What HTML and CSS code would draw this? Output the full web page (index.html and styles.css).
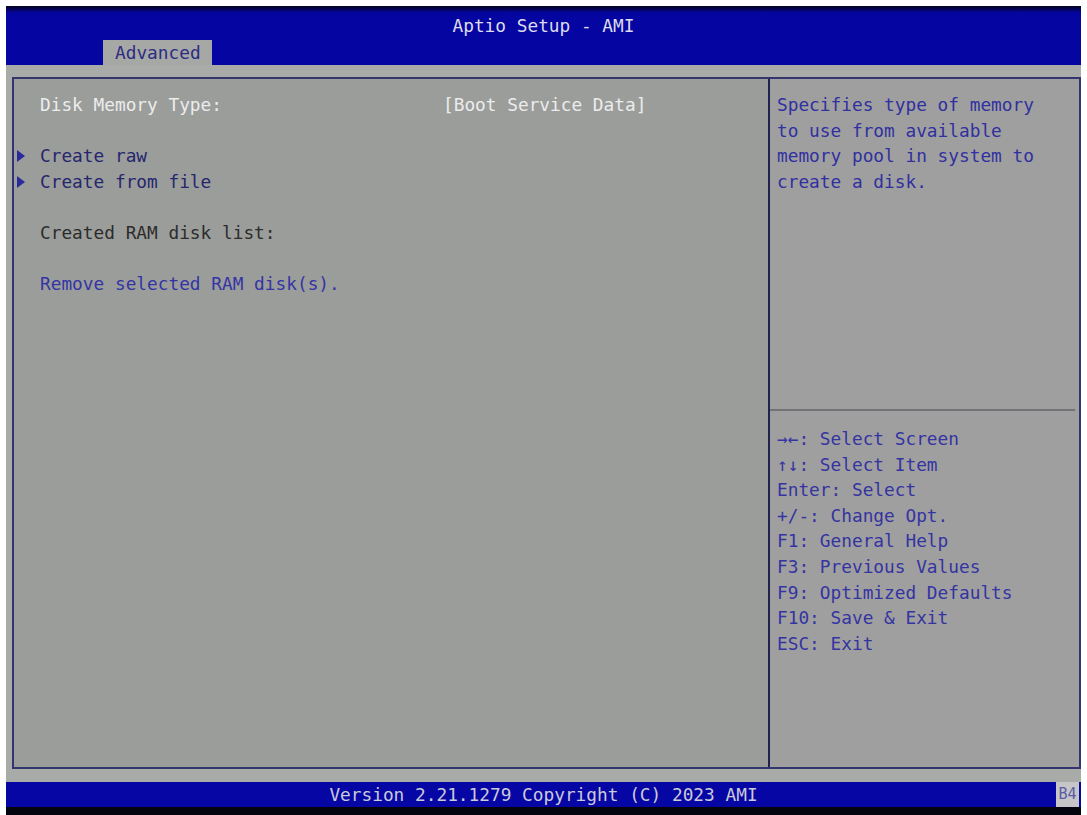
FILE: index.html
```html
<!DOCTYPE html>
<html lang="en">
<head>
    <meta charset="UTF-8">
    <title>Aptio Setup - AMI</title>
    <link rel="stylesheet" href="styles.css">
</head>
<body>
    <div class="screen">
        <div class="header">
            <div class="title">Aptio Setup - AMI</div>
            <div class="tabs">
                <div class="tab">Advanced</div>
            </div>
        </div>
        <div class="body">
            <div class="panel">
                <div class="main">
                    <div class="row">
                        <span class="mark"></span>
                        <span class="label white">Disk Memory Type:</span>
                        <span class="value white">[Boot Service Data]</span>
                    </div>
                    <div class="row"></div>
                    <div class="row">
                        <span class="mark"><span class="arrow"></span></span>
                        <span class="link">Create raw</span>
                    </div>
                    <div class="row">
                        <span class="mark"><span class="arrow"></span></span>
                        <span class="link">Create from file</span>
                    </div>
                    <div class="row"></div>
                    <div class="row">
                        <span class="mark"></span>
                        <span class="dark">Created RAM disk list:</span>
                    </div>
                    <div class="row"></div>
                    <div class="row">
                        <span class="mark"></span>
                        <span class="action">Remove selected RAM disk(s).</span>
                    </div>
                </div>
                <div class="side">
                    <div class="help">
                        Specifies type of memory<br>
                        to use from available<br>
                        memory pool in system to<br>
                        create a disk.
                    </div>
                    <div class="keys">
                        <div>&rarr;&larr;: Select Screen</div>
                        <div>&uarr;&darr;: Select Item</div>
                        <div>Enter: Select</div>
                        <div>+/-: Change Opt.</div>
                        <div>F1: General Help</div>
                        <div>F3: Previous Values</div>
                        <div>F9: Optimized Defaults</div>
                        <div>F10: Save &amp; Exit</div>
                        <div>ESC: Exit</div>
                    </div>
                </div>
            </div>
        </div>
        <div class="footer">
            <span></span>
            <span class="version">Version 2.21.1279 Copyright (C) 2023 AMI</span>
            <span class="code">B4</span>
        </div>
    </div>
</body>
</html>
```

FILE: styles.css
```css
body {
    margin: 0;
    background-color: #ffffff;
    font-family: "DejaVu Sans Mono", "Liberation Mono", monospace;
    font-size: 17.8px;
    line-height: 25.6px;
}
.screen {
    margin: 6px 6px 0 6px;
    height: 809px;
    display: flex;
    flex-direction: column;
}
.header {
    height: 59px;
    background: linear-gradient(#03031a 0, #0505a2 7px, #0505a2 100%);
    display: flex;
    flex-direction: column;
    justify-content: space-between;
}
.title {
    padding-top: 7px;
    text-align: center;
    color: #dcdcec;
}
.tabs {
    display: flex;
    padding-left: 97px;
}
.tab {
    width: 97px;
    height: 25px;
    line-height: 25px;
    padding-left: 12px;
    background-color: #a6a8a6;
    color: #2c2c82;
}
.body {
    flex-grow: 1;
    background-color: #a9aba9;
    padding: 12px 0 13px 6px;
    display: flex;
}
.panel {
    flex-grow: 1;
    display: flex;
    border: 2px solid #34346e;
    background-color: #9b9d9b;
}
.main {
    width: 754px;
    padding-top: 13px;
    border-right: 2px solid #222250;
}
.row {
    display: flex;
    height: 25.6px;
}
.mark {
    width: 26px;
    display: flex;
    align-items: center;
}
.arrow {
    margin-left: 3px;
    width: 0;
    height: 0;
    border-top: 6px solid transparent;
    border-bottom: 6px solid transparent;
    border-left: 8px solid #2a2a9a;
}
.label {
    width: 403px;
}
.white {
    color: #ececec;
}
.link {
    color: #26266e;
}
.dark {
    color: #2c2c2c;
}
.action {
    color: #3434a4;
}
.side {
    flex-grow: 1;
    display: flex;
    flex-direction: column;
    background-color: #a09f9f;
}
.help {
    height: 317px;
    padding: 13px 0 0 7px;
    color: #3030a0;
    border-bottom: 2px solid #727276;
    margin-right: 4px;
}
.keys {
    padding: 15px 0 0 7px;
    color: #3434a2;
}
.footer {
    height: 25px;
    line-height: 25px;
    background-color: #0606a4;
    border-bottom: 8px solid #04040e;
    display: grid;
    grid-template-columns: 1fr auto 1fr;
}
.version {
    color: #cacad8;
}
.code {
    justify-self: end;
    width: 23px;
    margin-right: 2px;
    background-color: #c6c6c8;
    color: #5c5ca2;
    text-align: center;
    font-size: 15px;
}
```
